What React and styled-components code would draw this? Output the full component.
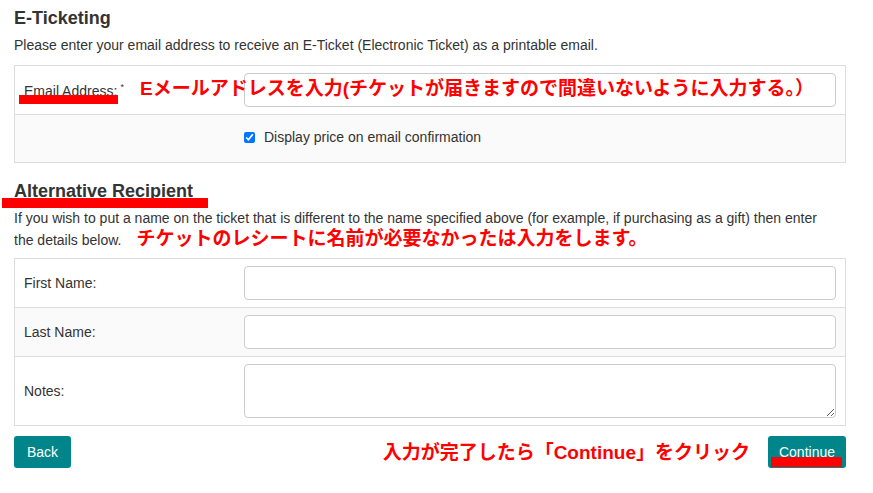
import React from "react";
import styled, { createGlobalStyle } from "styled-components";

const GlobalStyle = createGlobalStyle`
  body {
    margin: 0;
    background: #fff;
    font-family: "Liberation Sans", Arial, sans-serif;
    color: #333;
  }
`;

const Page = styled.div`
  width: 832px;
  padding: 8px 0 20px 14px;
`;

const Heading = styled.h2`
  position: relative;
  margin: ${(props) => (props.$first ? "0" : "18px")} 0 6px;
  font-size: 18px;
  line-height: 20px;
  font-weight: bold;
  color: #333;
`;

const Mark = styled.span`
  position: absolute;
  background: #ff0000;
  left: ${(props) => props.$left}px;
  top: ${(props) => props.$top}px;
  width: ${(props) => props.$width}px;
  height: ${(props) => props.$height || 9}px;
`;

const Intro = styled.p`
  margin: 0 0 ${(props) => (props.$tight ? 7 : 9)}px;
  font-size: 14px;
  line-height: 22px;
  color: #333;
`;

const Note = styled.span`
  font-family: "Liberation Sans", "Noto Sans CJK JP", sans-serif;
  font-weight: bold;
  font-size: 19px;
  line-height: 1;
  color: #ff0000;
  white-space: nowrap;
  margin-left: ${(props) => props.$gap || 0}px;
`;

const FloatNote = styled(Note)`
  position: absolute;
  left: 125px;
  top: 13px;
  line-height: 20px;
  margin: 0;
`;

const Table = styled.div`
  border: 1px solid #ddd;
`;

const Row = styled.div`
  position: relative;
  display: grid;
  grid-template-columns: 220px 1fr;
  align-items: center;
  padding: 7px 9px;
  min-height: 33px;
  background: ${(props) => (props.$shade ? "#fafafa" : "#fff")};
  & + & {
    border-top: 1px solid #ddd;
  }
`;

const Label = styled.label`
  font-size: 14px;
  color: #333;
`;

const Req = styled.sup`
  font-size: 9px;
  margin-left: 3px;
`;

const Input = styled.input`
  box-sizing: border-box;
  width: 100%;
  height: 34px;
  border: 1px solid #ccc;
  border-radius: 4px;
  padding: 6px 10px;
  font: 14px "Liberation Sans", Arial, sans-serif;
  background: #fff;
`;

const TextArea = styled.textarea`
  box-sizing: border-box;
  width: 100%;
  height: 54px;
  border: 1px solid #ccc;
  border-radius: 4px;
  padding: 6px 10px;
  font: 14px "Liberation Sans", Arial, sans-serif;
  background: #fff;
  display: block;
`;

const Check = styled.label`
  grid-column: 2;
  display: flex;
  align-items: center;
  gap: 9px;
  font-size: 14px;
  color: #333;
  margin-top: -3px;
  input {
    margin: 0;
    width: 11px;
    height: 11px;
  }
`;

const Actions = styled.div`
  display: flex;
  align-items: center;
  margin-top: 10px;
`;

const Button = styled.button`
  position: relative;
  height: 32px;
  padding: 0 ${(props) => (props.$wide ? 11 : 13)}px;
  border: none;
  border-radius: 3px;
  background: #00868a;
  color: #fff;
  font: 14px "Liberation Sans", Arial, sans-serif;
  cursor: pointer;
  margin-left: ${(props) => (props.$push ? "18px" : "0")};
`;

const Spacer = styled.div`
  flex: 1;
`;

export default function App() {
  return (
    <Page>
      <GlobalStyle />
      <Heading $first>E-Ticketing</Heading>
      <Intro>
        Please enter your email address to receive an E-Ticket (Electronic Ticket) as a printable email.
      </Intro>
      <Table>
        <Row>
          <Label>
            Email Address:<Req>*</Req>
          </Label>
          <Input type="email" />
          <Mark $left={4} $top={29} $width={99} />
          <FloatNote>Eメールアドレスを入力(チケットが届きますので間違いないように入力する。）</FloatNote>
        </Row>
        <Row $shade>
          <Check>
            <input type="checkbox" defaultChecked />
            Display price on email confirmation
          </Check>
        </Row>
      </Table>

      <Heading>
        Alternative Recipient
        <Mark $left={-12} $top={17} $width={206} $height={10} />
      </Heading>
      <Intro $tight>
        If you wish to put a name on the ticket that is different to the name specified above (for example, if purchasing as a gift) then enter
        <br />
        the details below.
        <Note $gap={15}>チケットのレシートに名前が必要なかったは入力をします。</Note>
      </Intro>
      <Table>
        <Row>
          <Label>First Name:</Label>
          <Input type="text" />
        </Row>
        <Row $shade>
          <Label>Last Name:</Label>
          <Input type="text" />
        </Row>
        <Row>
          <Label>Notes:</Label>
          <TextArea />
        </Row>
      </Table>

      <Actions>
        <Button>Back</Button>
        <Spacer />
        <Note>入力が完了したら「Continue」をクリック</Note>
        <Button $push $wide>
          Continue
          <Mark $left={3} $top={21} $width={71} $height={10} />
        </Button>
      </Actions>
    </Page>
  );
}
